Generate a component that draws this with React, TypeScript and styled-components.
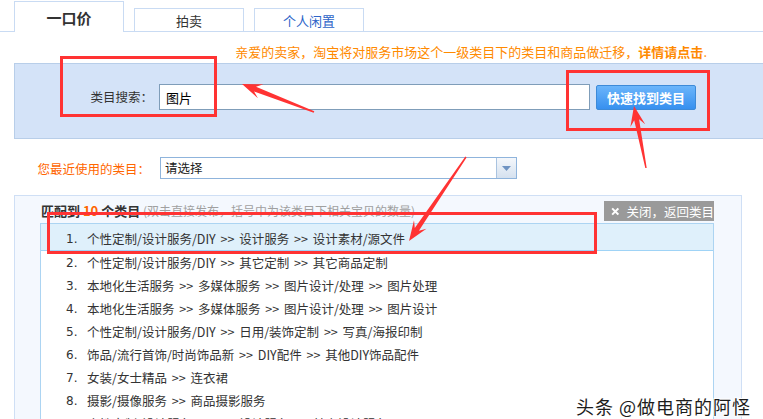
import styled, { createGlobalStyle } from "styled-components";

const GlobalStyle = createGlobalStyle`
  html, body {
    margin: 0;
    padding: 0;
    overflow: hidden;
    background: #fff;
  }
  body {
    font-family: "Noto Sans CJK SC", "Noto Sans", sans-serif;
    font-size: 12px;
    color: #333;
  }
`;

const rows = [
  "个性定制/设计服务/DIY >> 设计服务 >> 设计素材/源文件",
  "个性定制/设计服务/DIY >> 其它定制 >> 其它商品定制",
  "本地化生活服务 >> 多媒体服务 >> 图片设计/处理 >> 图片处理",
  "本地化生活服务 >> 多媒体服务 >> 图片设计/处理 >> 图片设计",
  "个性定制/设计服务/DIY >> 日用/装饰定制 >> 写真/海报印制",
  "饰品/流行首饰/时尚饰品新 >> DIY配件 >> 其他DIY饰品配件",
  "女装/女士精品 >> 连衣裙",
  "摄影/摄像服务 >> 商品摄影服务",
  "个性定制/设计服务/DIY >> 设计服务 >> 其它设计服务",
];

type Pt = [number, number];

function arrowPoints(tail: Pt, tip: Pt, headLen = 20, headW = 15, neckW = 5, tailW = 1.5) {
  const [x1, y1] = tail;
  const [x2, y2] = tip;
  const len = Math.hypot(x2 - x1, y2 - y1);
  const ux = (x2 - x1) / len;
  const uy = (y2 - y1) / len;
  const nx = -uy;
  const ny = ux;
  const neck: Pt = [x2 - ux * headLen * 0.7, y2 - uy * headLen * 0.7];
  const base: Pt = [x2 - ux * headLen, y2 - uy * headLen];
  const pts: Pt[] = [
    [x1 + (nx * tailW) / 2, y1 + (ny * tailW) / 2],
    [neck[0] + (nx * neckW) / 2, neck[1] + (ny * neckW) / 2],
    [base[0] + (nx * headW) / 2, base[1] + (ny * headW) / 2],
    [x2, y2],
    [base[0] - (nx * headW) / 2, base[1] - (ny * headW) / 2],
    [neck[0] - (nx * neckW) / 2, neck[1] - (ny * neckW) / 2],
    [x1 - (nx * tailW) / 2, y1 - (ny * tailW) / 2],
  ];
  return pts.map((p) => p.map((v) => v.toFixed(1)).join(",")).join(" ");
}

export default function App() {
  return (
    <Page>
      <GlobalStyle />
      <TabBar>
        <Tab $active>一口价</Tab>
        <Tab>拍卖</Tab>
        <Tab $blue>个人闲置</Tab>
      </TabBar>

      <Notice>
        亲爱的卖家，淘宝将对服务市场这个一级类目下的类目和商品做迁移，<b>详情请点击</b>.
      </Notice>

      <SearchPanel>
        <SearchLabel>类目搜索：</SearchLabel>
        <SearchInput defaultValue="图片" />
        <FindButton>快速找到类目</FindButton>
      </SearchPanel>

      <RecentRow>
        <RecentLabel>您最近使用的类目：</RecentLabel>
        <SelectBox>
          <SelectText>请选择</SelectText>
          <SelectArrow>
            <svg width="9" height="5" viewBox="0 0 9 5">
              <path d="M0 0h9L4.5 5z" fill="#6f93c2" />
            </svg>
          </SelectArrow>
        </SelectBox>
      </RecentRow>

      <ResultPanel>
        <ResultHeader>
          <ResultTitle>
            匹配到 <Count>10</Count> 个类目
            <Hint> (双击直接发布，括号中为该类目下相关宝贝的数量)</Hint>
          </ResultTitle>
          <CloseButton>
            <svg width="11" height="11" viewBox="0 0 11 11">
              <path d="M1.5 1.5l8 8M9.5 1.5l-8 8" stroke="#fff" strokeWidth="2.6" />
            </svg>
            关闭，返回类目
          </CloseButton>
        </ResultHeader>
        <List>
          {rows.map((r, i) => (
            <Row key={i} $active={i === 0}>
              <Num>{i + 1}.</Num>
              <RowText>{r}</RowText>
            </Row>
          ))}
        </List>
      </ResultPanel>

      <Overlay>
        <RedBox style={{ left: 60, top: 56, width: 157, height: 61 }} />
        <RedBox style={{ left: 566, top: 70, width: 144, height: 61 }} />
        <RedBox style={{ left: 47, top: 212, width: 550, height: 42 }} />
        <svg width="763" height="419" viewBox="0 0 763 419">
          <polygon points={arrowPoints([314, 112], [242, 84])} fill="#f33" />
          <polygon points={arrowPoints([646, 168], [634, 106])} fill="#f33" />
          <polygon points={arrowPoints([466, 157], [409, 241])} fill="#f33" />
        </svg>
        <Watermark>头条 @做电商的阿怪</Watermark>
      </Overlay>
    </Page>
  );
}

const Page = styled.div`
  position: relative;
  width: 763px;
  height: 419px;
  overflow: hidden;
`;

const TabBar = styled.div`
  display: flex;
  align-items: flex-end;
  gap: 10px;
  height: 31px;
  padding-left: 14px;
  border-bottom: 1px solid #c9dbf3;
`;

const Tab = styled.div<{ $active?: boolean; $blue?: boolean }>`
  box-sizing: border-box;
  width: 110px;
  height: ${(p) => (p.$active ? 31 : 23)}px;
  margin-bottom: ${(p) => (p.$active ? -1 : 0)}px;
  border: 1px solid #c9dbf3;
  border-bottom: none;
  background: #fff;
  display: flex;
  align-items: center;
  justify-content: center;
  font-size: ${(p) => (p.$active ? 15 : 13)}px;
  font-weight: ${(p) => (p.$active ? 700 : 400)};
  color: ${(p) => (p.$blue ? "#2d64c8" : "#333")};
`;

const Notice = styled.div`
  height: 31px;
  display: flex;
  align-items: flex-end;
  justify-content: flex-end;
  padding: 0 56px 3px 0;
  box-sizing: border-box;
  font-size: 13px;
  line-height: 16px;
  color: #ff8a00;
  b {
    font-weight: 700;
  }
`;

const SearchPanel = styled.div`
  box-sizing: border-box;
  height: 76px;
  margin-left: 14px;
  padding-top: 20px;
  display: flex;
  align-items: flex-start;
  background: #d4e3f8;
  border: 1px solid #b8cee9;
  border-right: none;
`;

const SearchLabel = styled.div`
  width: 138px;
  margin-right: 6px;
  text-align: right;
  line-height: 26px;
  font-size: 12.5px;
  color: #333;
`;

const SearchInput = styled.input`
  box-sizing: border-box;
  width: 431px;
  height: 26px;
  padding: 0 6px;
  border: 1px solid #7f9db9;
  font-family: "Noto Sans CJK SC", sans-serif;
  font-size: 13px;
  color: #000;
  outline: none;
`;

const FindButton = styled.button`
  box-sizing: border-box;
  width: 100px;
  height: 25px;
  margin: 1px 0 0 6px;
  border: 1px solid #3d8ad8;
  border-radius: 2px;
  background: linear-gradient(#6bb5fb, #3790ef);
  color: #fff;
  font-family: "Noto Sans CJK SC", sans-serif;
  font-size: 13px;
  font-weight: 700;
  padding: 0;
`;

const RecentRow = styled.div`
  display: flex;
  align-items: center;
  margin-top: 18px;
  padding-left: 14px;
`;

const RecentLabel = styled.div`
  width: 136px;
  margin-right: 10px;
  text-align: right;
  font-size: 12.5px;
  color: #ff6600;
`;

const SelectBox = styled.div`
  box-sizing: border-box;
  width: 357px;
  height: 22px;
  display: flex;
  border: 1px solid #8fb4dc;
  background: #fff;
`;

const SelectText = styled.div`
  flex: 1;
  padding-left: 4px;
  line-height: 20px;
  font-size: 12.5px;
  color: #222;
`;

const SelectArrow = styled.div`
  width: 19px;
  display: flex;
  align-items: center;
  justify-content: center;
  border-left: 1px solid #a9c3e0;
  background: linear-gradient(#f4f7fb, #d5e1ef);
`;

const ResultPanel = styled.div`
  box-sizing: border-box;
  width: 728px;
  height: 260px;
  margin: 16px 0 0 14px;
  padding: 0 27px 0 25px;
  background: #f4f8fe;
  border: 1px solid #cfdff5;
`;

const ResultHeader = styled.div`
  height: 27px;
  display: flex;
  align-items: flex-start;
  justify-content: space-between;
  padding: 5px 0 0 1px;
  box-sizing: border-box;
`;

const ResultTitle = styled.div`
  line-height: 20px;
  font-size: 13px;
  font-weight: 700;
  color: #333;
  white-space: nowrap;
`;

const Count = styled.span`
  color: #ff6600;
`;

const Hint = styled.span`
  font-size: 12px;
  font-weight: 400;
  color: #a0a0a0;
`;

const CloseButton = styled.div`
  width: 110px;
  height: 20px;
  display: flex;
  align-items: center;
  gap: 7px;
  padding-left: 7px;
  box-sizing: border-box;
  background: #9a9a9a;
  color: #fff;
  font-size: 12.5px;
  white-space: nowrap;
`;

const List = styled.div`
  height: 240px;
  background: #fff;
  border: 1px solid #acd4f2;
`;

const Row = styled.div<{ $active?: boolean }>`
  display: flex;
  align-items: center;
  box-sizing: border-box;
  height: ${(p) => (p.$active ? 27 : 23)}px;
  padding: ${(p) => (p.$active ? "3px" : "0")} 0 0 25px;
  background: ${(p) => (p.$active ? "#dff0fb" : "transparent")};
  border-bottom: ${(p) => (p.$active ? "1px solid #9fd3f6" : "none")};
  white-space: nowrap;
`;

const Num = styled.span`
  width: 21px;
  font-family: "DejaVu Sans", sans-serif;
  font-size: 12px;
  line-height: 16px;
  color: #333;
`;

const RowText = styled.span`
  font-size: 12.5px;
  line-height: 16px;
  color: #333;
  word-spacing: 2px;
`;

const Overlay = styled.div`
  position: absolute;
  inset: 0;
  pointer-events: none;
  svg {
    position: absolute;
    left: 0;
    top: 0;
  }
`;

const RedBox = styled.div`
  position: absolute;
  box-sizing: border-box;
  border: 3px solid #f33;
`;

const Watermark = styled.div`
  position: absolute;
  right: 12px;
  bottom: 3px;
  font-size: 18px;
  letter-spacing: 1px;
  line-height: 20px;
  color: #1c1c1c;
  text-shadow: 1px 1px 0 #fff, -1px -1px 0 #fff, 1px -1px 0 #fff, -1px 1px 0 #fff;
  white-space: nowrap;
`;
